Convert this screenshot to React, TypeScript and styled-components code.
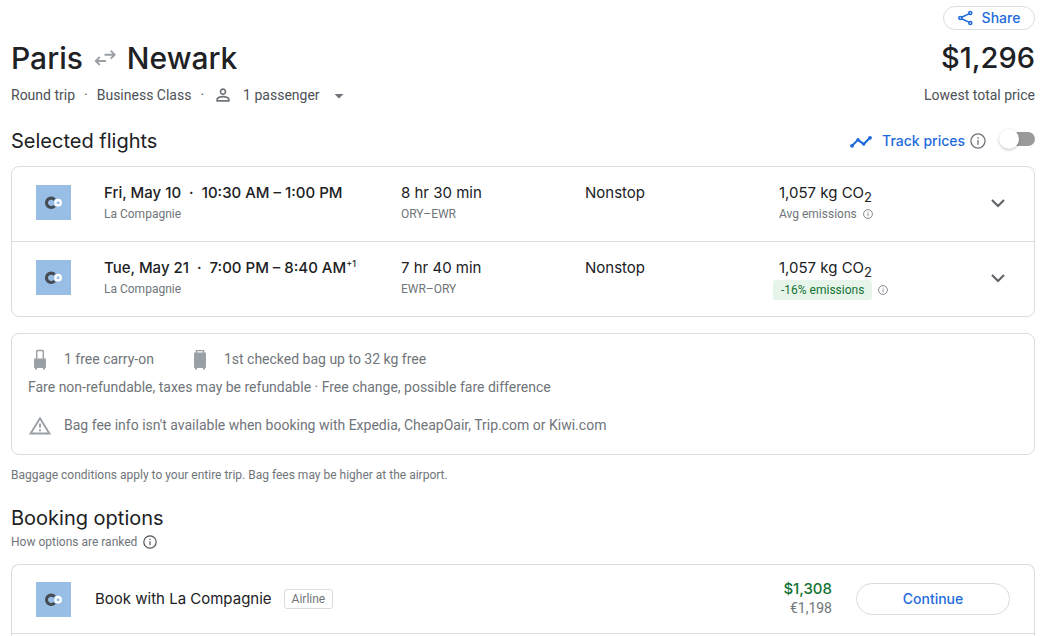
import React from "react";
import styled, { createGlobalStyle } from "styled-components";

const display = `"Inter", "Liberation Sans", sans-serif`;
const text = `"Roboto", "Liberation Sans", sans-serif`;

const color = {
  ink: "#202124",
  soft: "#4d5156",
  muted: "#70757a",
  icon: "#9aa0a6",
  line: "#dadce0",
  blue: "#1f6bdc",
  green: "#137333",
};

const GlobalStyle = createGlobalStyle`
  *, *::before, *::after { box-sizing: border-box; }
  body { margin: 0; background: #fff; color: ${color.ink}; font: 400 14px/20px ${text}; }
  h1, h2, p { margin: 0; font-weight: 400; }
  button { font: inherit; color: inherit; background: none; border: 0; padding: 0; cursor: pointer; }
  svg { display: block; flex: none; }
`;

const Page = styled.main`
  display: flex;
  flex-direction: column;
  min-height: 100vh;
  padding: 6px 8px 0 11px;
`;

const Bar = styled.div`
  display: flex;
  align-items: center;
  justify-content: space-between;
`;

const TopBar = styled(Bar)`
  justify-content: flex-end;
`;

const TitleBar = styled(Bar)`
  margin-top: 8px;
`;

const DetailBar = styled(Bar)`
  margin-top: 7px;
  color: ${color.soft};
`;

const SectionBar = styled(Bar)`
  margin: 22px 0 11px;
`;

const PillButton = styled.button<{ $size: "small" | "large" }>`
  display: flex;
  align-items: center;
  justify-content: center;
  gap: 8px;
  width: ${(p) => (p.$size === "large" ? 154 : 92)}px;
  height: ${(p) => (p.$size === "large" ? 32 : 24)}px;
  border: 1px solid ${color.line};
  border-radius: 16px;
  color: ${color.blue};
  font: 500 14px/20px ${display};
`;

const Title = styled.h1`
  display: flex;
  align-items: center;
  gap: 10px;
  font: 500 30px/40px ${display};
`;

const Total = styled.div`
  font: 500 29px/40px ${display};
`;

const TripDetails = styled.div`
  display: flex;
  align-items: center;
  gap: 9px;
`;

const PassengerButton = styled.button`
  display: flex;
  align-items: center;
  gap: 10px;
`;

const SectionTitle = styled.h2`
  font: 400 20px/28px ${display};
`;

const Track = styled.label`
  display: flex;
  align-items: center;
  gap: 5px;
  color: ${color.blue};
  font: 500 14px/20px ${display};
  cursor: pointer;

  svg:first-child {
    margin-right: 4px;
  }
`;

const Switch = styled.input`
  appearance: none;
  display: flex;
  align-items: center;
  width: 34px;
  height: 14px;
  margin: 0 0 4px 10px;
  border-radius: 7px;
  background: #9a9a9a;
  cursor: pointer;

  &::before {
    content: "";
    width: 20px;
    height: 20px;
    margin-left: -2px;
    border-radius: 50%;
    background: #fff;
    box-shadow: 0 1px 3px rgba(0, 0, 0, 0.25);
  }

  &:checked {
    justify-content: flex-end;
    background: ${color.blue};
  }
`;

const Card = styled.section`
  border: 1px solid ${color.line};
  border-radius: 8px;
`;

const FlightRow = styled.article`
  display: grid;
  grid-template-columns: 68px 297fr 184fr 194fr 207fr 24px;
  min-height: 74px;
  padding: 14px 24px;

  & + & {
    min-height: 75px;
    border-top: 1px solid ${color.line};
  }
`;

const Logo = styled.svg`
  width: 35px;
  height: 35px;
`;

const LogoCell = styled.div`
  padding-top: 4px;
`;

const Primary = styled.p<{ $strong?: boolean }>`
  font: ${(p) => (p.$strong ? 500 : 400)} 15px/24px ${display};
  white-space: nowrap;
`;

const DayShift = styled.sup`
  font-size: 9px;
  line-height: 0;
`;

const Subscript = styled.sub`
  font-size: 13px;
  line-height: 0;
`;

const Secondary = styled.p`
  display: flex;
  align-items: center;
  gap: 6px;
  color: ${color.muted};
  font-size: 12px;
  line-height: 18px;
  white-space: nowrap;
`;

const EmissionChip = styled.span`
  margin-left: -6px;
  padding: 0 8px;
  border-radius: 3px;
  background: #e6f4ea;
  color: ${color.green};
  line-height: 20px;
`;

const ExpandButton = styled.button`
  align-self: start;
  margin-top: 10px;
  color: #5f6368;
`;

const BaggageCard = styled(Card)`
  margin-top: 16px;
  padding: 15px 16px 19px;
  color: ${color.muted};
`;

const BagLine = styled.div`
  display: flex;
  gap: 34px;
`;

const IconText = styled.p`
  display: flex;
  align-items: center;
  gap: 12px;
  height: 20px;

  svg {
    color: ${color.icon};
  }
`;

const FareRules = styled.p`
  margin: 8px 0 18px;
`;

const Footnote = styled.p`
  margin: 10px 0 19px;
  color: ${color.muted};
  font-size: 12px;
`;

const RankingNote = styled(Secondary)`
  margin: 1px 0 13px;
`;

const OptionsCard = styled(Card)`
  display: flex;
  flex: 1;
  flex-direction: column;
  border-bottom: 0;
  border-radius: 8px 8px 0 0;
`;

const OptionRow = styled.article`
  display: flex;
  align-items: center;
  gap: 24px;
  min-height: 69px;
  padding: 0 24px;
  border-bottom: 1px solid ${color.line};
`;

const Provider = styled.div`
  display: flex;
  flex: 1;
  align-items: center;
  gap: 12px;
`;

const Tag = styled.span`
  padding: 0 7px;
  border: 1px solid ${color.line};
  border-radius: 3px;
  color: ${color.muted};
  font-size: 12px;
  line-height: 18px;
`;

const Prices = styled.div`
  padding-bottom: 2px;
  color: ${color.muted};
  line-height: 18px;
  text-align: right;
`;

const Deal = styled.div`
  color: ${color.green};
  font: 500 15px/20px ${display};
`;

const CompagnieLogo = () => (
  <Logo viewBox="0 0 35 35" role="img" aria-label="La Compagnie">
    <rect width="35" height="35" fill="#98bee6" />
    <path d="M18.6 14.6a4.7 4.7 0 1 0 0 6.4" fill="none" stroke="#454c53" strokeWidth="3.1" />
    <circle cx="22.1" cy="17.7" r="2.7" fill="#98bee6" stroke="#fff" strokeWidth="2.3" />
  </Logo>
);

const InfoIcon = ({ size, tone = color.muted }: { size: number; tone?: string }) => (
  <svg width={size} height={size} viewBox="0 0 24 24" fill="none" stroke={tone} strokeWidth="2">
    <circle cx="12" cy="12" r="10.6" />
    <path d="M12 10.5v7M12 6.3v2.3" />
  </svg>
);

const ShareIcon = () => (
  <svg width="16" height="16" viewBox="0 0 16 16" fill="none" stroke="currentColor" strokeWidth="1.5">
    <path d="M3.6 7.2l7.8-3.6M3.6 8.800l7.800 3.600" />
    <circle cx="2.300" cy="8" r="1.500" />
    <circle cx="12.300" cy="2.900" r="1.500" />
    <circle cx="12.300" cy="13.100" r="1.500" />
  </svg>
);

const RoundTripIcon = () => (
  <svg width="24" height="24" viewBox="0 0 24 24" fill="none" stroke={color.icon} strokeWidth="1.9">
    <path d="M11.5 8.7h10M17.7 4.7l4 4-4 4M13 15H3M6.8 11l-4 4 4 4" />
  </svg>
);

const PersonIcon = () => (
  <svg width="20" height="20" viewBox="0 0 24 24" fill={color.muted}>
    <path d="M12 6c1.1 0 2 .9 2 2s-.9 2-2 2-2-.9-2-2 .9-2 2-2m0 9c2.7 0 5.8 1.29 6 2v1H6v-.99c.2-.72 3.3-2.01 6-2.01m0-11C9.79 4 8 5.79 8 8s1.79 4 4 4 4-1.79 4-4-1.79-4-4-4zm0 9c-2.67 0-8 1.34-8 4v3h16v-3c0-2.66-5.33-4-8-4z" />
  </svg>
);

const CaretIcon = () => (
  <svg width="18" height="20" viewBox="0 0 18 20" fill={color.muted}>
    <path d="M4.5 9h9L9 13.5z" />
  </svg>
);

const TrendIcon = () => (
  <svg width="24" height="24" viewBox="0 0 24 24" fill="currentColor">
    <path d="M3 16.8l6-6 5.7 4.3L21 8.8" fill="none" stroke="currentColor" strokeWidth="2.1" />
    <circle cx="3" cy="16.8" r="1.9" />
    <circle cx="9" cy="10.8" r="1.7" />
    <circle cx="14.7" cy="15.1" r="1.7" />
    <circle cx="21" cy="8.8" r="1.9" />
  </svg>
);

const ChevronIcon = () => (
  <svg width="24" height="24" viewBox="0 0 24 24" fill="none" stroke="currentColor" strokeWidth="2.1">
    <path d="M6 9l6 6 6-6" />
  </svg>
);

const CarryOnIcon = () => (
  <svg width="24" height="24" viewBox="0 0 24 24" fill="currentColor">
    <path d="M8.7 12V4.300q0-.8.8-.8h5q.8 0 .8.8V12" fill="none" stroke="currentColor" strokeWidth="1.4" />
    <path d="M7 11.5h10q1 0 1 1V20q0 1-1 1v1.5h-2V21H9v1.5H7V21q-1 0-1-1v-7.5q0-1 1-1z" />
  </svg>
);

const CheckedBagIcon = () => (
  <svg width="24" height="24" viewBox="0 0 24 24" fill="currentColor">
    <path d="M8.500 6.500V3.600h7v2.900" fill="none" stroke="currentColor" strokeWidth="1.4" />
    <path d="M7 5.500h10q1 0 1 1V20q0 1-1 1v1.500h-2V21H9v1.500H7V21q-1 0-1-1V6.500q0-1 1-1z" />
  </svg>
);

const WarningIcon = () => (
  <svg width="24" height="24" viewBox="0 0 24 24" fill="none" stroke="currentColor" strokeWidth="1.9">
    <path d="M12 5.2L2.6 20.5h18.8z" />
    <path d="M12 10.5v4M12 16.3v2" />
  </svg>
);

type Flight = {
  date: string;
  times: string;
  shift?: string;
  duration: string;
  route: string;
  saving?: string;
};

const flights: Flight[] = [
  { date: "Fri, May 10", times: "10:30 AM – 1:00 PM", duration: "8 hr 30 min", route: "ORY–EWR" },
  { date: "Tue, May 21", times: "7:00 PM – 8:40 AM", shift: "+1", duration: "7 hr 40 min", route: "EWR–ORY", saving: "-16% emissions" },
];

const FlightItem = ({ flight }: { flight: Flight }) => (
  <FlightRow>
    <LogoCell>
      <CompagnieLogo />
    </LogoCell>
    <div>
      <Primary $strong>
        {flight.date} &nbsp;·&nbsp; {flight.times}
        {flight.shift && <DayShift>{flight.shift}</DayShift>}
      </Primary>
      <Secondary>La Compagnie</Secondary>
    </div>
    <div>
      <Primary>{flight.duration}</Primary>
      <Secondary>{flight.route}</Secondary>
    </div>
    <Primary>Nonstop</Primary>
    <div>
      <Primary>
        1,057 kg CO<Subscript>2</Subscript>
      </Primary>
      <Secondary>
        {flight.saving ? <EmissionChip>{flight.saving}</EmissionChip> : "Avg emissions"}
        <InfoIcon size={10} />
      </Secondary>
    </div>
    <ExpandButton aria-label="Flight details">
      <ChevronIcon />
    </ExpandButton>
  </FlightRow>
);

export default function App() {
  return (
    <Page>
      <GlobalStyle />
      <TopBar>
        <PillButton $size="small">
          <ShareIcon />
          Share
        </PillButton>
      </TopBar>
      <TitleBar>
        <Title>
          Paris
          <RoundTripIcon />
          Newark
        </Title>
        <Total>$1,296</Total>
      </TitleBar>
      <DetailBar>
        <TripDetails>
          <span>Round trip</span>
          <span>·</span>
          <span>Business Class</span>
          <span>·</span>
          <PassengerButton>
            <PersonIcon />
            1 passenger
            <CaretIcon />
          </PassengerButton>
        </TripDetails>
        <span>Lowest total price</span>
      </DetailBar>

      <SectionBar>
        <SectionTitle>Selected flights</SectionTitle>
        <Track>
          <TrendIcon />
          Track prices
          <InfoIcon size={16} />
          <Switch type="checkbox" role="switch" />
        </Track>
      </SectionBar>
      <Card>
        {flights.map((flight) => (
          <FlightItem key={flight.date} flight={flight} />
        ))}
      </Card>

      <BaggageCard>
        <BagLine>
          <IconText>
            <CarryOnIcon />
            1 free carry-on
          </IconText>
          <IconText>
            <CheckedBagIcon />
            1st checked bag up to 32 kg free
          </IconText>
        </BagLine>
        <FareRules>Fare non-refundable, taxes may be refundable · Free change, possible fare difference</FareRules>
        <IconText>
          <WarningIcon />
          Bag fee info isn't available when booking with Expedia, CheapOair, Trip.com or Kiwi.com
        </IconText>
      </BaggageCard>
      <Footnote>Baggage conditions apply to your entire trip. Bag fees may be higher at the airport.</Footnote>

      <SectionTitle>Booking options</SectionTitle>
      <RankingNote>
        How options are ranked
        <InfoIcon size={14} tone={color.soft} />
      </RankingNote>
      <OptionsCard>
        <OptionRow>
          <CompagnieLogo />
          <Provider>
            <Primary>Book with La Compagnie</Primary>
            <Tag>Airline</Tag>
          </Provider>
          <Prices>
            <Deal>$1,308</Deal>
            €1,198
          </Prices>
          <PillButton $size="large">Continue</PillButton>
        </OptionRow>
      </OptionsCard>
    </Page>
  );
}
